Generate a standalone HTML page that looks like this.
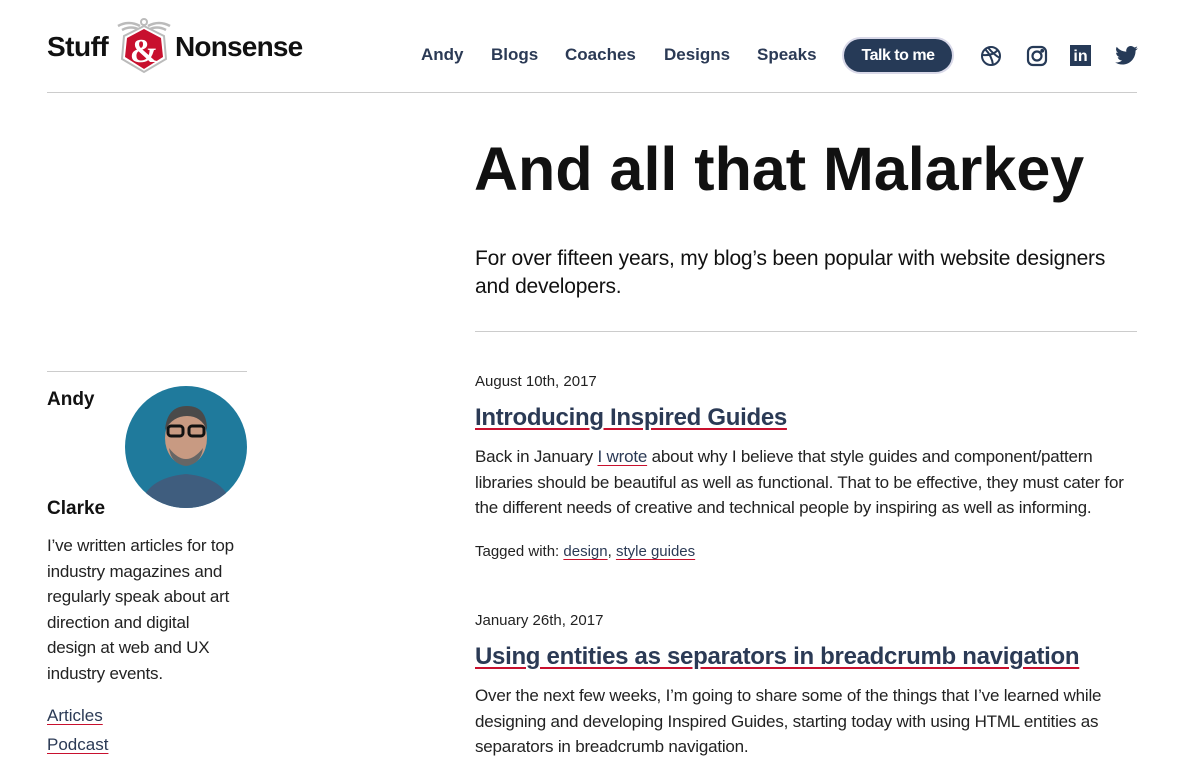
<!DOCTYPE html>
<html><head><meta charset="utf-8"><style>
*{margin:0;padding:0;box-sizing:border-box}
body{width:1200px;height:768px;overflow:hidden;background:#fff;font-family:"Liberation Sans",sans-serif;color:#222;position:relative}
.a{position:absolute;white-space:nowrap}
a{color:#2b3a55;text-decoration:underline;text-decoration-color:#c8102e;text-underline-offset:3px}
.nav{font-size:17px;font-weight:bold;color:#2b3a55;top:45px}
.hr{position:absolute;height:1px;background:#ccc}
.p{position:absolute;font-size:17px;line-height:25.5px;color:#222}
.t{font-size:24px;font-weight:bold;color:#2b3a55;letter-spacing:-0.3px}
</style></head><body>
<div class="a" style="left:47px;top:31px;font-size:28px;font-weight:bold;color:#111;letter-spacing:-0.5px">Stuff</div>
<svg class="a" style="left:114px;top:14px" width="60" height="60" viewBox="0 0 60 60">
<path d="M4 12 Q15 6 26 12 M34 12 Q45 6 56 12 M8 16 Q17 11 26 16 M34 16 Q43 11 52 16" stroke="#bbb" stroke-width="2.5" fill="none"/>
<circle cx="30" cy="8" r="3" fill="none" stroke="#bbb" stroke-width="2"/>
<path d="M30 12 L50 22 L52 45 L30 58 L8 45 L10 22 Z" fill="#fff" stroke="#bbb" stroke-width="2"/>
<path d="M30 15 L47 24 L49 43 L30 55 L11 43 L13 24 Z" fill="#c8102e"/>
<text x="30" y="48" text-anchor="middle" font-family="Liberation Serif" font-size="34" font-weight="bold" fill="#fff">&amp;</text>
</svg>
<div class="a" style="left:175px;top:31px;font-size:28px;font-weight:bold;color:#111;letter-spacing:-0.8px">Nonsense</div>
<div class="a nav" style="left:421px">Andy</div>
<div class="a nav" style="left:491px">Blogs</div>
<div class="a nav" style="left:565px">Coaches</div>
<div class="a nav" style="left:664px">Designs</div>
<div class="a nav" style="left:757px">Speaks</div>
<div class="a" style="left:844px;top:39px;width:108px;height:33px;border-radius:17px;background:#263a57;box-shadow:0 0 0 2px #d8d8e8;color:#fff;font-weight:bold;font-size:16px;text-align:center;line-height:33px;letter-spacing:-0.5px">Talk to me</div>
<svg class="a" style="left:980px;top:45px" width="22" height="22" viewBox="0 0 22 22" fill="none" stroke="#263a57" stroke-width="2"><circle cx="11" cy="11" r="9"/><path d="M5 4 Q12 11 13 20 M3 10 Q12 11 18 5 M8 2.5 Q14 10 20 13"/></svg>
<svg class="a" style="left:1026px;top:45px" width="22" height="22" viewBox="0 0 22 22" fill="none" stroke="#263a57" stroke-width="2.2"><rect x="2" y="2" width="18" height="18" rx="5"/><circle cx="11" cy="11" r="4.5"/><circle cx="16.2" cy="5.8" r="0.8" fill="#263a57"/></svg>
<div class="a" style="left:1070px;top:45px;width:21px;height:21px;background:#263a57;color:#fff;font-weight:bold;font-size:16px;line-height:23px;text-align:center">in</div>
<svg class="a" style="left:1115px;top:46px" width="23" height="19" viewBox="0 0 24 20"><path fill="#263a57" d="M24 2.4a10 10 0 0 1-2.8.8A5 5 0 0 0 23.3.4a10 10 0 0 1-3.1 1.2A4.9 4.9 0 0 0 11.8 6 14 14 0 0 1 1.7.9a4.9 4.9 0 0 0 1.5 6.6A5 5 0 0 1 1 6.9a4.9 4.9 0 0 0 3.9 4.8 5 5 0 0 1-2.2.1 4.9 4.9 0 0 0 4.6 3.4A9.9 9.9 0 0 1 0 17.3 14 14 0 0 0 7.5 19.5c9 0 14-7.5 14-14v-.6A10 10 0 0 0 24 2.4z"/></svg>
<div class="hr" style="left:47px;top:92px;width:1090px"></div>

<div class="a" style="left:474px;top:134px;font-size:61px;font-weight:bold;color:#111;letter-spacing:0">And all that Malarkey</div>
<div class="p" style="left:475px;top:245px;font-size:21px;line-height:28px;width:670px;color:#111;letter-spacing:-0.2px">For over fifteen years, my blog’s been popular with website designers and developers.</div>
<div class="hr" style="left:475px;top:331px;width:662px"></div>

<div class="a" style="left:475px;top:373px;font-size:15px">August 10th, 2017</div>
<div class="a t" style="left:475px;top:404px"><a>Introducing Inspired Guides</a></div>
<div class="p" style="left:475px;top:444px;width:662px;letter-spacing:-0.2px">Back in January <a>I wrote</a> about why I believe that style guides and component/pattern libraries should be beautiful as well as functional. That to be effective, they must cater for the different needs of creative and technical people by inspiring as well as informing.</div>
<div class="a" style="left:475px;top:543px;font-size:15px">Tagged with: <a>design</a>, <a>style guides</a></div>

<div class="a" style="left:475px;top:612px;font-size:15px">January 26th, 2017</div>
<div class="a t" style="left:475px;top:643px"><a>Using entities as separators in breadcrumb navigation</a></div>
<div class="p" style="left:475px;top:683px;width:662px;letter-spacing:-0.2px">Over the next few weeks, I’m going to share some of the things that I’ve learned while designing and developing Inspired Guides, starting today with using HTML entities as separators in breadcrumb navigation.</div>

<div class="hr" style="left:47px;top:371px;width:200px"></div>
<div class="a" style="left:47px;top:389px;font-size:19px;font-weight:bold;color:#111">Andy</div>
<div class="a" style="left:47px;top:498px;font-size:19px;font-weight:bold;color:#111">Clarke</div>
<svg class="a" style="left:125px;top:386px" width="122" height="122" viewBox="0 0 122 122">
<defs><clipPath id="c"><circle cx="61" cy="61" r="61"/></clipPath></defs>
<g clip-path="url(#c)"><rect width="122" height="122" fill="#1f7a9c"/>
<path d="M15 122 Q20 92 61 88 Q102 92 107 122Z" fill="#3f5d7e"/>
<ellipse cx="61" cy="52" rx="21" ry="27" fill="#c89a82"/>
<path d="M40 44 Q42 20 62 20 Q82 20 82 44 Q76 30 62 30 Q48 30 40 44Z" fill="#4a4a4a"/>
<rect x="43" y="40" width="15" height="10" rx="3" fill="none" stroke="#111" stroke-width="3"/>
<rect x="64" y="40" width="15" height="10" rx="3" fill="none" stroke="#111" stroke-width="3"/>
<path d="M44 62 Q61 84 78 62 Q76 78 61 80 Q46 78 44 62Z" fill="#666"/></g></svg>
<div class="p" style="left:47px;top:533px;width:190px;letter-spacing:-0.2px">I’ve written articles for top industry magazines and regularly speak about art direction and digital design at web and UX industry events.</div>
<div class="a" style="left:47px;top:706px;font-size:17px"><a>Articles</a></div>
<div class="a" style="left:47px;top:735px;font-size:17px"><a>Podcast</a></div>
</body></html>
